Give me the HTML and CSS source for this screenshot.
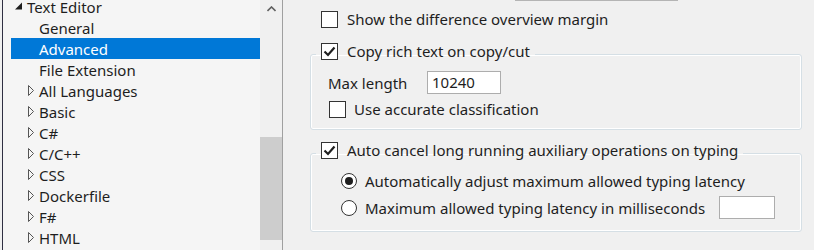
FILE: index.html
```html
<!DOCTYPE html>
<html lang="en">
<head>
  <meta charset="UTF-8">
  <title>Options - Text Editor - Advanced</title>
  <link rel="stylesheet" href="styles.css">
</head>
<body>

  <!-- Options tree -->
  <div class="tree-pane">
    <div class="tree">
      <div class="node lvl0">
        <svg class="arrow" width="8" height="8" viewBox="0 0 8 8"><path d="M7 0.5V7.5H0Z" fill="#1e1e1e"/></svg>
        Text Editor
      </div>
      <div class="node lvl1">General</div>
      <div class="node lvl1 selected">Advanced</div>
      <div class="node lvl1">File Extension</div>
      <div class="node lvl1 has-kids"><svg class="arrow" width="6" height="11" viewBox="0 0 6 11"><path d="M0.5 0.5L5.5 5.5L0.5 10.5Z" fill="none" stroke="#555" /></svg>All Languages</div>
      <div class="node lvl1 has-kids"><svg class="arrow" width="6" height="11" viewBox="0 0 6 11"><path d="M0.5 0.5L5.5 5.5L0.5 10.5Z" fill="none" stroke="#555" /></svg>Basic</div>
      <div class="node lvl1 has-kids"><svg class="arrow" width="6" height="11" viewBox="0 0 6 11"><path d="M0.5 0.5L5.5 5.5L0.5 10.5Z" fill="none" stroke="#555" /></svg>C#</div>
      <div class="node lvl1 has-kids"><svg class="arrow" width="6" height="11" viewBox="0 0 6 11"><path d="M0.5 0.5L5.5 5.5L0.5 10.5Z" fill="none" stroke="#555" /></svg>C/C++</div>
      <div class="node lvl1 has-kids"><svg class="arrow" width="6" height="11" viewBox="0 0 6 11"><path d="M0.5 0.5L5.5 5.5L0.5 10.5Z" fill="none" stroke="#555" /></svg>CSS</div>
      <div class="node lvl1 has-kids"><svg class="arrow" width="6" height="11" viewBox="0 0 6 11"><path d="M0.5 0.5L5.5 5.5L0.5 10.5Z" fill="none" stroke="#555" /></svg>Dockerfile</div>
      <div class="node lvl1 has-kids"><svg class="arrow" width="6" height="11" viewBox="0 0 6 11"><path d="M0.5 0.5L5.5 5.5L0.5 10.5Z" fill="none" stroke="#555" /></svg>F#</div>
      <div class="node lvl1 has-kids"><svg class="arrow" width="6" height="11" viewBox="0 0 6 11"><path d="M0.5 0.5L5.5 5.5L0.5 10.5Z" fill="none" stroke="#555" /></svg>HTML</div>
    </div>

    <!-- Vertical scrollbar -->
    <div class="scrollbar">
      <div class="scroll-up">
        <svg width="9" height="6" viewBox="0 0 9 6"><path d="M0.5 5L4.5 1L8.5 5" fill="none" stroke="#606060" stroke-width="1.6"/></svg>
      </div>
      <div class="track"><div class="thumb"></div></div>
    </div>
  </div>

  <!-- Option page -->
  <div class="options">
    <div class="stub"></div>

    <div class="check-row top-row">
      <span class="box"></span>
      Show the difference overview margin
    </div>

    <fieldset class="group group-copy">
      <legend class="check-row">
        <span class="box"><svg width="15" height="15" viewBox="0 0 15 15"><path d="M2.5 7.5L6 11L12.5 3.5" fill="none" stroke="#1e1e1e" stroke-width="2.2"/></svg></span>
        Copy rich text on copy/cut
      </legend>
      <div class="group-body">
        <div class="field-row">
          <span class="field-label">Max length</span>
          <span class="textbox">10240</span>
        </div>
        <div class="check-row sub">
          <span class="box"></span>
          Use accurate classification
        </div>
      </div>
    </fieldset>

    <fieldset class="group group-cancel">
      <legend class="check-row">
        <span class="box"><svg width="15" height="15" viewBox="0 0 15 15"><path d="M2.5 7.5L6 11L12.5 3.5" fill="none" stroke="#1e1e1e" stroke-width="2.2"/></svg></span>
        Auto cancel long running auxiliary operations on typing
      </legend>
      <div class="group-body">
        <div class="radio-row first">
          <span class="radio on"></span>
          Automatically adjust maximum allowed typing latency
        </div>
        <div class="radio-row second">
          <span class="radio"></span>
          Maximum allowed typing latency in milliseconds
          <span class="textbox small"></span>
        </div>
      </div>
    </fieldset>
  </div>

</body>
</html>
```

FILE: styles.css
```css
/* Global */
* {
  box-sizing: border-box;
}

body {
  margin: 0;
  height: 250px;
  overflow: hidden;
  display: flex;
  background-color: #f0f0f0;
  font-family: "Noto Sans", sans-serif;
  font-size: 15px;
  color: #1e1e1e;
}

/* Tree pane */
.tree-pane {
  display: flex;
  width: 283px;
  height: 250px;
  padding-left: 2px;
  border-right: 1px solid #a0a0a0;
}

.tree {
  width: 258px;
  background-color: #f5f5f5;
  border-left: 1px solid #2f2f42;
}

.node {
  display: flex;
  align-items: center;
  height: 21px;
  margin-left: 8px;
  white-space: nowrap;
}

.node:first-child {
  margin-top: -4px;
}

.lvl0 {
  padding-left: 4px;
}

.lvl0 .arrow {
  margin-right: 4px;
  margin-top: -1px;
}

.lvl1 {
  padding-left: 28px;
}

.lvl1.has-kids {
  padding-left: 17px;
}

.lvl1 .arrow {
  margin-right: 5px;
}

.selected {
  background-color: #0078d7;
  color: #fff;
}

/* Scrollbar */
.scrollbar {
  width: 22px;
  display: flex;
  flex-direction: column;
  background-color: #f0f0f0;
}

.scroll-up {
  height: 17px;
  display: flex;
  justify-content: center;
  align-items: center;
  padding-top: 1px;
}

.track {
  flex: 1;
}

.thumb {
  margin-top: 120px;
  height: 103px;
  background-color: #cdcdcd;
}

/* Options page */
.options {
  flex: 1;
  padding: 0 12px 0 27px;
}

.stub {
  width: 163px;
  height: 1px;
  margin-left: 205px;
  margin-bottom: 8px;
  background-color: #b4b4b4;
}

.check-row {
  display: flex;
  align-items: center;
  gap: 9px;
  height: 20px;
  white-space: nowrap;
}

.top-row {
  padding-left: 11px;
}

.box {
  width: 17px;
  height: 17px;
  flex: none;
  background-color: #fff;
  border: 1px solid #333;
  display: flex;
  align-items: center;
  justify-content: center;
}

/* Group boxes */
.group {
  margin: 0;
  padding: 0;
  min-width: 0;
  border: 1px solid #d5dfe5;
  border-radius: 3px;
  box-shadow: inset 0 0 0 1px #fff;
}

.group legend {
  height: 26px;
  margin-left: 5px;
  padding: 0 5px 6px;
}

.group-copy {
  margin-top: 12px;
}

.group-copy .group-body {
  padding: 4px 0 10px 17px;
}

.group-cancel {
  margin-top: 10px;
}

.group-cancel .group-body {
  padding: 5px 0 12px 30px;
}

.field-row {
  display: flex;
  align-items: center;
  height: 23px;
}

.field-label {
  width: 99px;
}

.textbox {
  height: 23px;
  width: 74px;
  border: 1px solid #adadad;
  background-color: #fff;
  padding-left: 4px;
  line-height: 21px;
}

.textbox.small {
  width: 56px;
  margin-left: 6px;
}

.check-row.sub {
  margin-top: 5px;
  padding-left: 1px;
  gap: 8px;
}

/* Radio buttons */
.radio-row {
  display: flex;
  align-items: center;
  gap: 8px;
  white-space: nowrap;
}

.radio-row.first {
  height: 20px;
}

.radio-row.second {
  height: 23px;
  margin-top: 5px;
}

.radio {
  width: 16px;
  height: 16px;
  flex: none;
  border: 1px solid #333;
  border-radius: 50%;
  background-color: #fff;
  display: flex;
  align-items: center;
  justify-content: center;
}

.radio.on::after {
  content: "";
  width: 8px;
  height: 8px;
  border-radius: 50%;
  background-color: #1e1e1e;
}
```
